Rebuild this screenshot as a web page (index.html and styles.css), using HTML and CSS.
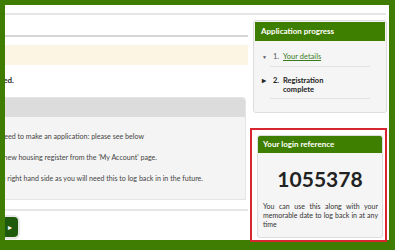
FILE: index.html
```html
<!DOCTYPE html>
<html lang="en">
<head>
  <meta charset="UTF-8">
  <title>Registration complete</title>
  <link rel="stylesheet" href="styles.css">
</head>
<body>
  <div class="frame">
    <div class="page">
      <div class="top-rule"></div>
      <div class="columns">
        <div class="main">
          <div class="title-area"></div>
          <div class="notice"></div>
          <p class="done"><span>Your registration has been completed.</span></p>

          <div class="panel">
            <div class="panel-head"></div>
            <div class="panel-body">
              <p class="l1"><span>If you need to make an application: please see below</span></p>
              <p class="l2"><span>You can join the new housing register from the 'My Account' page.</span></p>
              <p class="l3"><span>Please note your login reference on the right hand side as you will need this to log back in in the future.</span></p>
            </div>
          </div>

          <div class="bottom-rule"></div>
          <button class="next" type="button">Next<span class="arrow">&#9656;</span></button>
        </div>

        <div class="aside">
          <div class="box progress">
            <div class="box-head">Application progress</div>
            <ul class="steps">
              <li class="open"><span class="num">1.</span><a href="#">Your details</a></li>
              <li class="current"><span class="num">2.</span><span>Registration<br>complete</span></li>
            </ul>
          </div>

          <div class="highlight">
            <div class="box login">
              <div class="box-head">Your login reference</div>
              <div class="ref">1055378</div>
              <p class="ref-note">You can use this along with your memorable date to log back in at any time</p>
            </div>
          </div>
        </div>
      </div>
    </div>
  </div>
</body>
</html>
```

FILE: styles.css
```css
body {
  margin: 0;
  font-family: Lato, "Open Sans", sans-serif;
  color: #333;
}
.frame {
  width: 395px;
  height: 250px;
  box-sizing: border-box;
  background: #3f7c02;
  padding: 5px 6px 10px 5px;
  overflow: hidden;
}
.page {
  background: #fff;
  height: 235px;
  padding-top: 8px;
  box-sizing: border-box;
}
.top-rule {
  border-top: 2px solid #e6e6e6;
  margin-right: 3px;
}
.columns {
  display: flex;
}
.main {
  width: 243px;
  overflow: hidden;
}
.title-area {
  height: 20px;
  border-bottom: 2px solid #d6d6d6;
}
.notice {
  margin-top: 8px;
  height: 20px;
  background: #fcf5e3;
}
/* lines are cut off on the left, so they are pinned by their right end */
.done,
.panel-body p {
  display: flex;
  justify-content: flex-end;
  white-space: nowrap;
  margin: 0;
}
.done {
  width: 9px;
  margin-top: 10px;
  height: 10px;
  line-height: 10px;
  font-size: 8px;
  font-weight: bold;
  color: #2a2a2a;
}
.panel {
  margin: 12px 2px 0 0;
  border: 1px solid #e4e4e4;
  border-left: none;
  border-radius: 0 4px 0 0;
  overflow: hidden;
}
.panel-head {
  height: 19px;
  background: #dcdcdc;
}
.panel-body {
  background: #f4f4f4;
  padding: 9px 0 10px;
}
.panel-body p {
  line-height: 21px;
  font-size: 7.1px;
  color: #444;
}
.panel-body .l1 { width: 139px; }
.panel-body .l2 { width: 152px; }
.panel-body .l3 { width: 198px; }
.bottom-rule {
  margin-top: 9px;
  border-top: 2px solid #e6e6e6;
}
.next {
  display: block;
  margin: 6px 0 0 -34px;
  height: 20px;
  width: 47px;
  border: none;
  border-radius: 4px;
  background: #1f5a0c;
  color: #fff;
  font-family: inherit;
  font-size: 8px;
  text-align: right;
  padding: 0 6px 0 0;
  box-shadow: 0 0 0 2px #e8e8e8, 0 1px 3px rgba(0,0,0,0.3);
}
.arrow {
  margin-left: 8px;
}
.aside {
  margin-left: 5px;
  width: 134px;
}
.box {
  background: #f5f5f5;
  border: 1px solid #dddddd;
  border-radius: 3px;
}
.box-head {
  background: #3f7f00;
  color: #fff;
  font-weight: bold;
  font-size: 8px;
}
.progress {
  margin-top: 5px;
  height: 93px;
  box-sizing: border-box;
  padding: 1px;
}
.progress .box-head {
  height: 19px;
  line-height: 19px;
  padding-left: 6px;
}
.steps {
  list-style: none;
  margin: 0;
  padding: 0;
  font-size: 7.5px;
}
.steps li {
  display: flex;
  margin: 0 15px 0 15px;
  border-bottom: 1px solid #e2e2e2;
}
.steps li::before {
  width: 8px;
  margin-left: -8px;
  color: #222;
}
.steps .open {
  padding: 11px 0 4px;
  line-height: 10px;
  color: #555;
}
.steps .open::before {
  content: "\25BC";
  font-size: 5px;
  color: #555;
}
.steps .current {
  padding: 9px 0 4px;
  line-height: 9px;
  font-weight: bold;
  color: #222;
}
.steps .current::before {
  content: "\25B8";
  font-size: 8px;
}
.num {
  width: 10px;
  padding-left: 3px;
}
.steps a {
  color: #3a7b1c;
}
.highlight {
  margin-top: 15px;
  border: 2px solid #d7262f;
  padding: 5px 2px 2px 5px;
  margin-left: -3px;
}
.login {
  height: 103px;
  box-sizing: border-box;
}
.login .box-head {
  height: 17px;
  line-height: 17px;
  padding-left: 5px;
  border-radius: 2px 2px 0 0;
}
.ref {
  margin-top: 14px;
  text-align: center;
  font-size: 21px;
  font-weight: bold;
  line-height: 24px;
  color: #222;
}
.ref-note {
  margin: 11px 4px 0 5px;
  font-size: 7px;
  line-height: 9px;
  text-align: justify;
  color: #333;
}
```
